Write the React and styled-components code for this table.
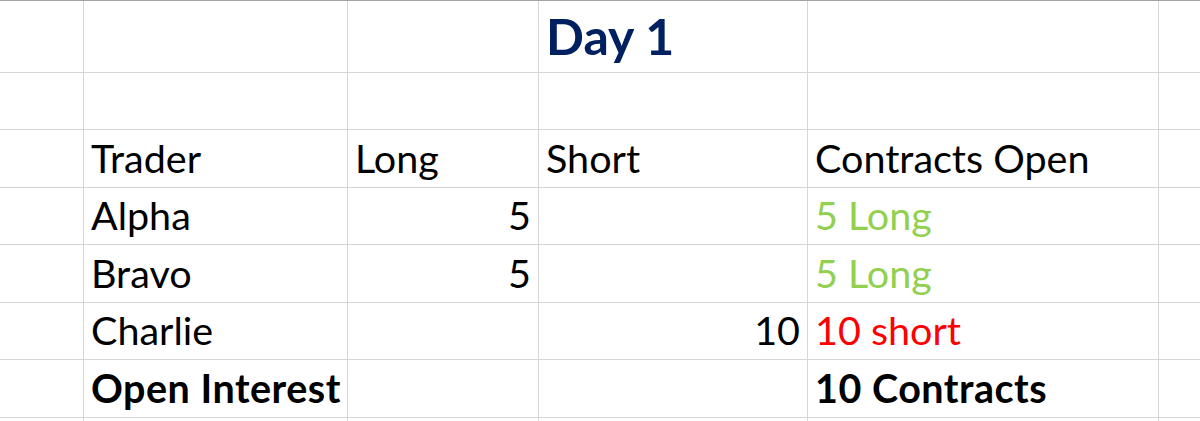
import React from "react";
import styled, { createGlobalStyle } from "styled-components";

const Global = createGlobalStyle`
  html, body { margin: 0; padding: 0; background: #ffffff; }
  body { font-family: Lato, "Open Sans", sans-serif; }
`;

const Sheet = styled.div`
  display: grid;
  width: 1200px;
  grid-template-columns: 84px 264px 191px 269px 351px 1fr;
  grid-template-rows: 72px 57px 58px 57px 58px 57px 58px 3px;
  border-top: 1px solid #a3a3a3;
  overflow: hidden;
`;

const Cell = styled.div`
  box-sizing: border-box;
  display: flex;
  align-items: flex-end;
  justify-content: ${(p) => (p.$right ? "flex-end" : "flex-start")};
  padding: 0 7px ${(p) => (p.$title ? "6px" : "6px")} 7px;
  border-bottom: ${(p) => (p.$open ? "none" : "1px solid #d6d6d6")};
  border-right: ${(p) => (p.$last ? "none" : "1px solid #d6d6d6")};
  font-family: Lato, "Open Sans", sans-serif;
  font-size: ${(p) => (p.$title ? "50px" : "39.5px")};
  line-height: ${(p) => (p.$title ? "60px" : "46px")};
  font-weight: ${(p) => (p.$bold || p.$title ? 700 : 400)};
  letter-spacing: ${(p) => (p.$bold ? "0.5px" : "0")};
  color: ${(p) => p.$color || "#000000"};
  white-space: nowrap;
`;

const GREEN = "#92d050";
const RED = "#ff0000";
const NAVY = "#002060";

const rows = [
  [null, null, null, { t: "Day 1", title: true, color: NAVY }, null, null],
  [null, null, null, null, null, null],
  [null, { t: "Trader" }, { t: "Long" }, { t: "Short" }, { t: "Contracts Open" }, null],
  [null, { t: "Alpha" }, { t: "5", right: true }, null, { t: "5 Long", color: GREEN }, null],
  [null, { t: "Bravo" }, { t: "5", right: true }, null, { t: "5 Long", color: GREEN }, null],
  [null, { t: "Charlie" }, null, { t: "10", right: true }, { t: "10 short", color: RED }, null],
  [null, { t: "Open Interest", bold: true }, null, null, { t: "10 Contracts", bold: true }, null],
  [{ open: true }, { open: true }, { open: true }, { open: true }, { open: true }, { open: true }],
];

export default function App() {
  return (
    <>
      <Global />
      <Sheet>
        {rows.map((row, r) =>
          row.map((c, i) => (
            <Cell
              key={`${r}-${i}`}
              $last={i === row.length - 1}
              $right={c?.right}
              $title={c?.title}
              $bold={c?.bold}
              $color={c?.color}
              $open={c?.open}
            >
              {c?.t}
            </Cell>
          ))
        )}
      </Sheet>
    </>
  );
}
